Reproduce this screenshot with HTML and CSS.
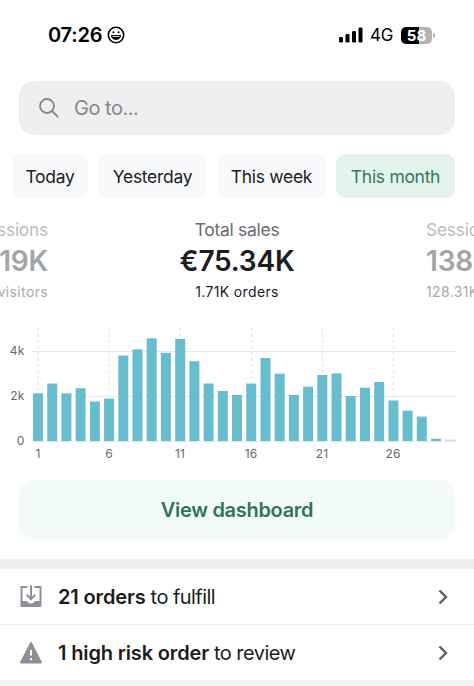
FILE: index.html
```html
<!DOCTYPE html>
<html lang="en">
<head>
    <meta charset="UTF-8">
    <meta name="viewport" content="width=device-width, initial-scale=1.0">
    <title>Dashboard</title>
    <link rel="stylesheet" href="styles.css">
</head>
<body>
    <div class="status">
        <span class="time">07:26</span>
        <svg class="face" width="18" height="18" viewBox="0 0 18 18">
            <circle cx="9" cy="9" r="7.700" fill="none" stroke="#000" stroke-width="1.600"/>
            <circle cx="6.400" cy="6.200" r="1" fill="#000"/>
            <circle cx="11.600" cy="6.200" r="1" fill="#000"/>
            <path d="M4 9h10c0 3-2.200 4.900-5 4.900S4 12 4 9z" fill="#000"/>
            <path d="M5.500 10.400h7" stroke="#fff" stroke-width=".9"/>
        </svg>
        <svg class="signal" width="24" height="16" viewBox="0 0 24 16">
            <rect x="0" y="10" width="4" height="5.500" rx="1.200"/>
            <rect x="6.500" y="7" width="4" height="8.500" rx="1.200"/>
            <rect x="13" y="4" width="4" height="11.500" rx="1.200"/>
            <rect x="19.500" y="0.500" width="4" height="15" rx="1.200"/>
        </svg>
        <span class="net">4G</span>
        <div class="battery">58</div>
        <div class="cap"></div>
    </div>

    <div class="search">
        <svg width="20" height="20" viewBox="0 0 20 20" fill="none" stroke="#84878b" stroke-width="1.800">
            <circle cx="8" cy="8" r="7"/>
            <path d="M13 13l6.200 6.200"/>
        </svg>
        <span>Go to...</span>
    </div>

    <div class="chips">
        <div class="chip today">Today</div>
        <div class="chip yesterday">Yesterday</div>
        <div class="chip week">This week</div>
        <div class="chip month">This month</div>
    </div>

    <div class="metrics">
        <div class="metric prev">
            <div class="name">Sessions</div>
            <div class="value">119K</div>
            <div class="note">visitors</div>
        </div>
        <div class="metric main">
            <div class="name">Total sales</div>
            <div class="value">€75.34K</div>
            <div class="note">1.71K orders</div>
        </div>
        <div class="metric next">
            <div class="name">Sessions</div>
            <div class="value">138K</div>
            <div class="note">128.31K visitors</div>
        </div>
    </div>

    <svg class="chart" width="474" height="150" viewBox="0 320 474 150">
        <path class="grid" d="M32 351.500H457M32 396.500H457M32 441.500H457"/>
        <path class="dash" d="M38 328V441M109 328V441M180 328V441M251.500 328V441M322.500 328V441M393.500 328V441"/>
        <g class="bars">
            <rect x="33" y="393.300" width="10" height="47.700"/>
            <rect x="47.200" y="383.500" width="10" height="57.500"/>
            <rect x="61.400" y="393.300" width="10" height="47.700"/>
            <rect x="75.600" y="388.200" width="10" height="52.800"/>
            <rect x="89.900" y="401.500" width="10" height="39.500"/>
            <rect x="104.100" y="398.600" width="10" height="42.400"/>
            <rect x="118.300" y="355.500" width="10" height="85.500"/>
            <rect x="132.500" y="349.300" width="10" height="91.700"/>
            <rect x="146.700" y="338.300" width="10" height="102.700"/>
            <rect x="160.900" y="352.900" width="10" height="88.100"/>
            <rect x="175.200" y="339" width="10" height="102"/>
            <rect x="189.400" y="361.200" width="10" height="79.800"/>
            <rect x="203.600" y="383.500" width="10" height="57.500"/>
            <rect x="217.800" y="391" width="10" height="50"/>
            <rect x="232" y="395" width="10" height="46"/>
            <rect x="246.200" y="383.600" width="10" height="57.400"/>
            <rect x="260.500" y="358" width="10" height="83"/>
            <rect x="274.700" y="373.700" width="10" height="67.300"/>
            <rect x="288.900" y="395" width="10" height="46"/>
            <rect x="303.100" y="386.700" width="10" height="54.300"/>
            <rect x="317.300" y="375" width="10" height="66"/>
            <rect x="331.500" y="373.400" width="10" height="67.600"/>
            <rect x="345.700" y="396" width="10" height="45"/>
            <rect x="360" y="387.700" width="10" height="53.300"/>
            <rect x="374.200" y="382" width="10" height="59"/>
            <rect x="388.400" y="400.500" width="10" height="40.500"/>
            <rect x="402.600" y="410.700" width="10" height="30.300"/>
            <rect x="416.800" y="416.600" width="10" height="24.400"/>
            <rect x="431" y="438.800" width="10" height="2.200"/>
            <rect class="empty" x="445.200" y="439.500" width="10" height="1.500"/>
        </g>
        <g class="ylab">
            <text x="24.500" y="355">4k</text>
            <text x="24.500" y="400">2k</text>
            <text x="24.500" y="445">0</text>
        </g>
        <g class="xlab">
            <text x="38" y="458">1</text>
            <text x="109" y="458">6</text>
            <text x="180" y="458">11</text>
            <text x="251" y="458">16</text>
            <text x="322" y="458">21</text>
            <text x="393" y="458">26</text>
        </g>
    </svg>

    <div class="dashboard">View dashboard</div>

    <div class="tasks">
        <div class="task">
            <svg class="icon" width="22" height="24" viewBox="0 0 22 24">
                <path d="M7.500 2H1.500v19h19V2H14.500" fill="none" stroke="#8c9098" stroke-width="2" stroke-linejoin="round"/>
                <path d="M1 16h5.500c1 0 1.700 2.500 4.500 2.500s3.500-2.500 4.500-2.500H21v6H1z" fill="#8c9098"/>
                <path d="M11 .5v13M6.800 9.800l4.200 4.200 4.200-4.200" fill="none" stroke="#8c9098" stroke-width="2"/>
            </svg>
            <div class="text"><b>21 orders</b> to fulfill</div>
            <svg class="arrow" width="10" height="16" viewBox="0 0 10 16">
                <path d="M1.500 1.500L8 8l-6.500 6.500"/>
            </svg>
        </div>
        <div class="task risk">
            <svg class="icon" width="22" height="24" viewBox="0 0 22 24">
                <path d="M11 2L21 21.500H1z" fill="#8c9098" stroke="#8c9098" stroke-width="1.800" stroke-linejoin="round"/>
                <path d="M11 9v5.500M11 17v2.200" stroke="#fff" stroke-width="2"/>
            </svg>
            <div class="text"><b>1 high risk order</b> to review</div>
            <svg class="arrow" width="10" height="16" viewBox="0 0 10 16">
                <path d="M1.500 1.500L8 8l-6.500 6.500"/>
            </svg>
        </div>
    </div>
</body>
</html>
```

FILE: styles.css
```css
*{
    margin:0;
    padding:0;
    box-sizing: border-box;
}
body{
    width: 474px;
    height: 686px;
    overflow: hidden;
    background: #fff;
    color: #1b1c1e;
    font-family: Inter, "Liberation Sans", sans-serif;
}
.status{
    height: 81px;
    padding: 0 39px 11px 48px;
    display: flex;
    align-items: center;
    color: #000;
}
.time{
    width: 55px;
    font-size: 20px;
    font-weight: 600;
    letter-spacing: -.2px;
    white-space: nowrap;
}
.face{
    margin-left: 4px;
}
.signal{
    margin-left: auto;
}
.net{
    width: 23px;
    margin: 0 8px 0 7px;
    font-size: 17px;
    letter-spacing: -.3px;
}
.battery{
    width: 31px;
    height: 17px;
    border-radius: 5px;
    background: linear-gradient(90deg, #000 58%, #b4b4b4 58%);
    color: #fff;
    font-size: 15px;
    font-weight: 700;
    line-height: 17px;
    text-align: center;
}
.cap{
    width: 2px;
    height: 5px;
    margin-left: 1px;
    border-radius: 0 2px 2px 0;
    background: #b4b4b4;
}
.search{
    height: 54px;
    margin: 0 19px;
    padding-left: 20px;
    display: flex;
    align-items: center;
    gap: 15px;
    border-radius: 15px;
    background: #eeeff1;
    color: #84878b;
    font-size: 20px;
    letter-spacing: -.5px;
}
.chips{
    margin: 19px 0 0 12px;
    display: flex;
    gap: 10px;
}
.chip{
    height: 44px;
    border-radius: 9px;
    background: #f8f9fb;
    font-size: 17.5px;
    letter-spacing: -.3px;
    line-height: 45px;
    text-align: center;
}
.today{
    width: 76px;
}
.yesterday{
    width: 109px;
}
.week{
    width: 109px;
}
.month{
    width: 119px;
    background: #e2f5ec;
    color: #3a765c;
}
.metrics{
    height: 122px;
    padding-top: 20px;
    display: flex;
    justify-content: space-between;
    white-space: nowrap;
}
.metric{
    width: 48px;
}
.name{
    color: #696b6f;
    font-size: 17.5px;
    letter-spacing: -.3px;
    line-height: 24px;
}
.value{
    font-size: 28px;
    font-weight: 600;
    letter-spacing: -.2px;
    line-height: 38px;
}
.note{
    font-size: 14px;
    letter-spacing: .35px;
    line-height: 24px;
}
.prev{
    display: flex;
    flex-direction: column;
    align-items: flex-end;
}
.main{
    width: 160px;
    text-align: center;
}
.prev .name,
.next .name{
    color: #bcbcbe;
}
.prev .value,
.next .value{
    color: #a3a4a5;
}
.prev .note,
.next .note{
    color: #a8a9aa;
}
.chart{
    display: block;
}
.grid{
    stroke: #e8e8ea;
}
.dash{
    fill: none;
    stroke: #e6e6e8;
    stroke-dasharray: 3 3;
}
.bars{
    fill: #67bdce;
}
.empty{
    fill: #dcdcdc;
}
.chart text{
    fill: #696969;
    font-size: 12px;
    letter-spacing: .2px;
}
.ylab{
    text-anchor: end;
}
.xlab{
    text-anchor: middle;
}
.dashboard{
    height: 60px;
    margin: 10px 19px 19px;
    border-radius: 15px;
    background: #f2fbf8;
    color: #33735a;
    font-size: 20px;
    font-weight: 600;
    letter-spacing: -.3px;
    line-height: 61px;
    text-align: center;
}
.tasks{
    border-top: 10px solid #efeff0;
}
.task{
    height: 56px;
    padding: 0 26px 0 20px;
    display: flex;
    align-items: center;
    border-bottom: 1px solid #ececee;
}
.risk{
    height: 61px;
    padding-bottom: 0;
    border-bottom: 6px solid #f3f3f4;
}
.text{
    flex: 1;
    margin-left: 16px;
    padding-top: 1px;
    font-size: 20px;
    letter-spacing: -.55px;
}
.text b{
    font-weight: 600;
    letter-spacing: -.15px;
}
.arrow{
    fill: none;
    stroke: #5d5e63;
    stroke-width: 2.4;
}
```
